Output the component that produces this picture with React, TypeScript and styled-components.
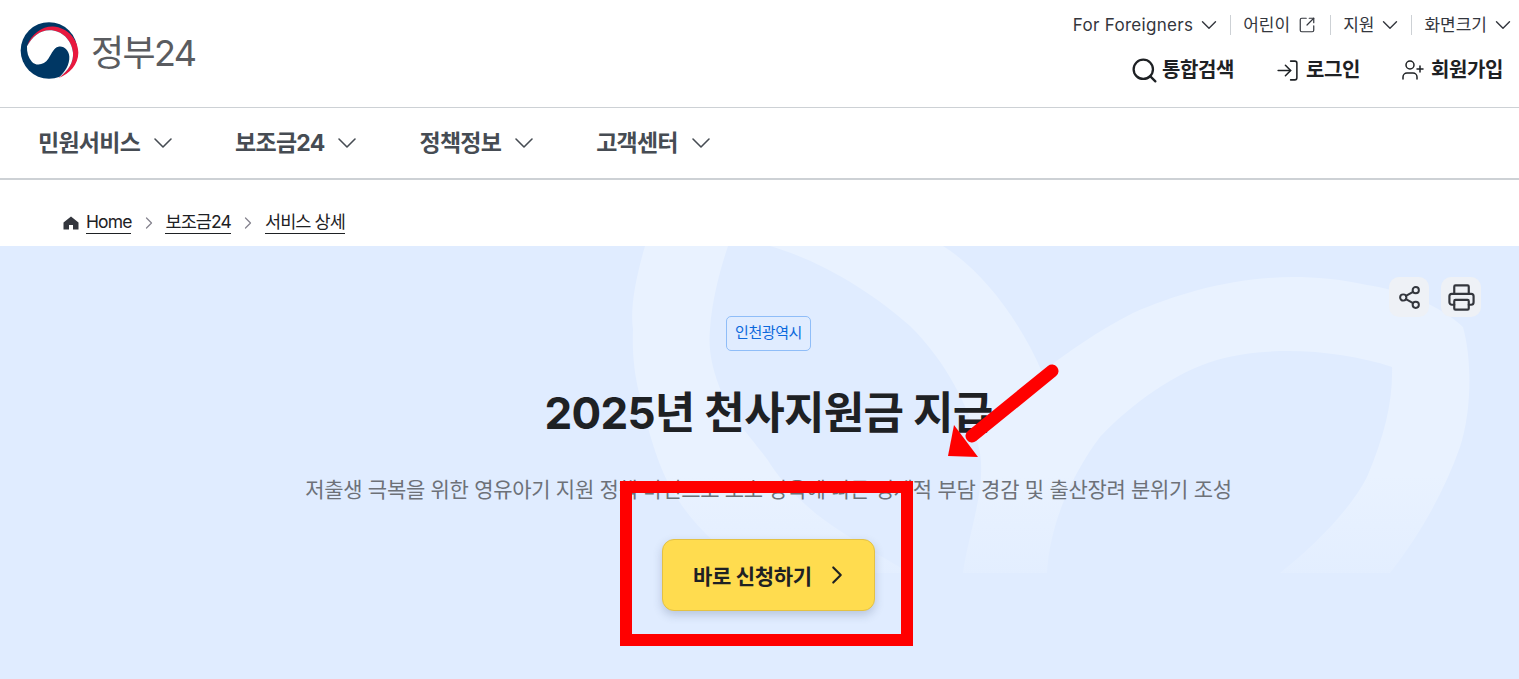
import React from 'react'
import styled, { createGlobalStyle } from 'styled-components'
import {
  ChevronDown,
  ChevronRight,
  LogIn,
  Printer,
  Search,
  Share2,
  SquareArrowOutUpRight,
  UserPlus,
} from 'lucide-react'

const FONT = `Inter, 'Noto Sans CJK KR', 'Noto Sans', sans-serif`

const GlobalStyle = createGlobalStyle`
  html, body {
    margin: 0;
    padding: 0;
    background: #fff;
    overflow: hidden;
  }
  body {
    font-family: ${FONT};
    color: #1e2124;
  }
`

const Page = styled.div`
  position: relative;
  width: 1519px;
  height: 679px;
  overflow: hidden;
`

const Header = styled.header`
  display: flex;
  justify-content: space-between;
  height: 107px;
  padding: 0 16px 0 19px;
  border-bottom: 1px solid #cdd1d5;
`

const Logo = styled.a`
  display: flex;
  align-items: center;
  gap: 12px;
  height: 101px;
`

const LogoText = styled.span`
  font-size: 36px;
  font-weight: 400;
  letter-spacing: -1.6px;
  color: #5a5c60;
  line-height: 1;
  margin-top: 4px;
`

const HeaderRight = styled.div`
  display: flex;
  flex-direction: column;
  align-items: flex-end;
`

const UtilRow = styled.div`
  display: flex;
  align-items: center;
  height: 20px;
  margin: 15px -13px 0 0;
`

const UtilItem = styled.span<{ $divider?: boolean }>`
  display: flex;
  align-items: center;
  gap: 3px;
  height: 20px;
  font-size: 17px;
  line-height: 20px;
  color: #33363d;
  padding-left: ${(p) => (p.$divider ? '12px' : '0')};
  margin-left: ${(p) => (p.$divider ? '8px' : '0')};
  border-left: ${(p) => (p.$divider ? '1px solid #cdd1d5' : 'none')};
  white-space: nowrap;
`

const LatinLabel = styled.span`
  letter-spacing: 0.3px;
`

const ExternalIcon = styled(SquareArrowOutUpRight)`
  margin: 0 6px 0 5px;
`

const ActionRow = styled.div`
  display: flex;
  align-items: center;
  gap: 41px;
  height: 28px;
  margin-top: 21px;
`

const ActionItem = styled.a`
  display: flex;
  align-items: center;
  gap: 6px;
  height: 28px;
  font-size: 20px;
  font-weight: 700;
  line-height: 28px;
  letter-spacing: -0.4px;
  color: #1e2124;
`

const SearchIcon = styled(Search)`
  margin-right: -3px;
`

const Nav = styled.nav`
  display: flex;
  align-items: center;
  height: 70px;
  padding-left: 38px;
  border-bottom: 2px solid #cdd1d5;
`

const NavItem = styled.a`
  display: flex;
  align-items: center;
  gap: 7px;
  margin-right: 56px;
  font-size: 23px;
  font-weight: 700;
  letter-spacing: -0.75px;
  color: #464c53;
  line-height: 30px;
`

const Breadcrumb = styled.ol`
  display: flex;
  align-items: center;
  height: 66px;
  margin: 0;
  padding: 19px 0 0 63px;
  box-sizing: border-box;
  list-style: none;
`

const Crumb = styled.li`
  display: flex;
  align-items: center;
  gap: 7px;
  font-size: 17.5px;
  line-height: 22px;
  letter-spacing: -0.9px;
  color: #1e2124;
`

const CrumbLink = styled.a`
  border-bottom: 1px solid #1e2124;
`

const CrumbArrow = styled(ChevronRight)`
  margin: 0 6.5px 0 7.5px;
  color: #85838e;
`

const Hero = styled.section`
  position: relative;
  display: flex;
  flex-direction: column;
  align-items: center;
  height: 433px;
  padding: 70px 0 0 18px;
  box-sizing: border-box;
  background: #e0ecff;
  overflow: hidden;
`

const Watermark = styled.svg`
  position: absolute;
  left: 0;
  top: 0;
`

const HeroTools = styled.div`
  position: absolute;
  top: 31px;
  right: 38px;
  display: flex;
  gap: 12px;
`

const ToolButton = styled.button`
  display: flex;
  align-items: center;
  justify-content: center;
  width: 40px;
  height: 40px;
  padding: 0;
  border: none;
  border-radius: 10px;
  background: #eef1f6;
  color: #33363d;
`

const Tag = styled.span`
  position: relative;
  display: flex;
  align-items: center;
  justify-content: center;
  box-sizing: border-box;
  width: 85px;
  height: 35px;
  padding-bottom: 5px;
  border: 1px solid #8fbdf8;
  border-radius: 5px;
  font-size: 15px;
  letter-spacing: -0.4px;
  color: #0b68dc;
`

const Title = styled.h1`
  position: relative;
  margin: 32px 0 0;
  font-size: 44px;
  line-height: 60px;
  font-weight: 700;
  letter-spacing: -0.7px;
  color: #1e2124;
`

const Summary = styled.p`
  position: relative;
  margin: 32px 0 0;
  font-size: 21px;
  line-height: 30px;
  letter-spacing: -0.3px;
  color: #6d7178;
`

const ApplyButton = styled.a`
  position: relative;
  display: flex;
  align-items: center;
  justify-content: center;
  gap: 10px;
  box-sizing: border-box;
  width: 213px;
  height: 72px;
  margin-top: 34px;
  padding-left: 8px;
  border: 1px solid #e3c144;
  border-radius: 12px;
  background: #ffdc4f;
  box-shadow: 0 4px 10px rgba(40, 60, 100, 0.22);
  font-size: 21px;
  font-weight: 700;
  letter-spacing: -0.3px;
  color: #1e2124;
`

const Annotation = styled.svg`
  position: absolute;
  left: 0;
  top: 0;
  pointer-events: none;
`

const Highlight = styled.div`
  position: absolute;
  left: 620px;
  top: 481px;
  width: 293px;
  height: 165px;
  box-sizing: border-box;
  border: 12px solid #ff0000;
  pointer-events: none;
`

const GovLogo = () => (
  <svg width="60" height="57" viewBox="0 0 180 170" aria-hidden="true">
    <circle cx="90" cy="85" r="85" fill="#003764" />
    <path
      d="M24 72 C38 34 70 12 102 13 C146 16 178 52 178 92 C178 126 152 156 118 168 C150 146 164 118 162 92 C158 52 128 24 92 24 C62 24 40 44 24 72 Z"
      fill="#e8193f"
    />
    <path
      d="M24 72 C40 44 62 24 92 24 C128 24 158 52 162 92 C164 118 150 146 118 168 C138 150 152 128 151 104 C150 84 134 70 118 74 C104 77 100 92 88 110 C76 128 52 134 38 118 C28 106 23 90 24 72 Z"
      fill="#ffffff"
    />
  </svg>
)

const HomeIcon = () => (
  <svg width="16" height="16" viewBox="0 0 16 16" aria-hidden="true">
    <path d="M8 1.5 15.5 7.6V14.5H10V10H6V14.5H0.5V7.6Z" fill="#33363d" />
  </svg>
)

const utilLinks = [
  { label: '어린이', external: true },
  { label: '지원' },
  { label: '화면크기' },
]

const navLinks = ['민원서비스', '보조금24', '정책정보', '고객센터']

export default function App() {
  return (
    <Page>
      <GlobalStyle />
      <Header>
        <Logo>
          <GovLogo />
          <LogoText>정부24</LogoText>
        </Logo>
        <HeaderRight>
          <UtilRow>
            <UtilItem>
              <LatinLabel>For Foreigners</LatinLabel>
              <ChevronDown size={26} strokeWidth={1.3} />
            </UtilItem>
            {utilLinks.map((link) => (
              <UtilItem key={link.label} $divider>
                {link.label}
                {link.external ? (
                  <ExternalIcon size={18} strokeWidth={1.6} />
                ) : (
                  <ChevronDown size={26} strokeWidth={1.3} />
                )}
              </UtilItem>
            ))}
          </UtilRow>
          <ActionRow>
            <ActionItem>
              <SearchIcon size={29} strokeWidth={1.9} />
              통합검색
            </ActionItem>
            <ActionItem>
              <LogIn size={25} strokeWidth={1.5} />
              로그인
            </ActionItem>
            <ActionItem>
              <UserPlus size={24} strokeWidth={1.5} />
              회원가입
            </ActionItem>
          </ActionRow>
        </HeaderRight>
      </Header>

      <Nav>
        {navLinks.map((label) => (
          <NavItem key={label}>
            {label}
            <ChevronDown size={32} strokeWidth={1.2} />
          </NavItem>
        ))}
      </Nav>

      <Breadcrumb>
        <Crumb>
          <HomeIcon />
          <CrumbLink>Home</CrumbLink>
        </Crumb>
        <CrumbArrow size={20} strokeWidth={1.5} />
        <Crumb>
          <CrumbLink>보조금24</CrumbLink>
        </Crumb>
        <CrumbArrow size={20} strokeWidth={1.5} />
        <Crumb>
          <CrumbLink>서비스 상세</CrumbLink>
        </Crumb>
      </Breadcrumb>

      <Hero>
        <Watermark width="1519" height="433" viewBox="0 246 1519 433" aria-hidden="true">
          <defs>
            <linearGradient id="markFade" gradientUnits="userSpaceOnUse" x1="0" y1="246" x2="0" y2="573">
              <stop offset="0.7" stopColor="#e9f2ff" stopOpacity="1" />
              <stop offset="1" stopColor="#e9f2ff" stopOpacity="0.35" />
            </linearGradient>
          </defs>
          <path
            d="M645 246 C635 280 630 310 633 329 C632 350 634 375 640 396 C648 430 658 465 670 486 C685 515 715 550 760 573 L910 573 C870 550 845 535 823 519 C800 502 780 480 767 459 C745 430 730 415 723 396 C712 370 708 350 710 329 C712 300 720 270 728 246 Z"
            fill="url(#markFade)"
          />
          <path
            d="M770 246 C825 262 875 295 910 326 C945 360 972 410 980 453 C986 490 968 535 963 573 L1047 573 C1050 520 1075 470 1100 437 C1130 405 1175 372 1217 360 C1270 345 1340 350 1392 367 C1393 400 1385 435 1367 477 C1350 510 1315 545 1280 573 L1390 573 C1420 535 1445 490 1460 447 C1472 410 1472 360 1463 327 C1440 305 1400 290 1367 285 C1340 279 1315 277 1293 277 C1230 278 1180 293 1133 313 C1100 330 1070 350 1042 372 C1022 325 985 272 943 246 Z"
            fill="url(#markFade)"
          />
        </Watermark>
        <HeroTools>
          <ToolButton>
            <Share2 size={25} strokeWidth={1.9} />
          </ToolButton>
          <ToolButton>
            <Printer size={29} strokeWidth={1.8} />
          </ToolButton>
        </HeroTools>
        <Tag>인천광역시</Tag>
        <Title>2025년 천사지원금 지급</Title>
        <Summary>저출생 극복을 위한 영유아기 지원 정책 마련으로 보호 양육에 따른 경제적 부담 경감 및 출산장려 분위기 조성</Summary>
        <ApplyButton>
          바로 신청하기
          <ChevronRight size={30} strokeWidth={1.7} />
        </ApplyButton>
      </Hero>

      <Highlight />
      <Annotation width="1519" height="679" viewBox="0 0 1519 679" aria-hidden="true">
        <line x1="1052" y1="371" x2="972" y2="436" stroke="#ff0000" strokeWidth="13" strokeLinecap="round" />
        <polygon points="948,456 954,425 978,457" fill="#ff0000" />
      </Annotation>
    </Page>
  )
}
